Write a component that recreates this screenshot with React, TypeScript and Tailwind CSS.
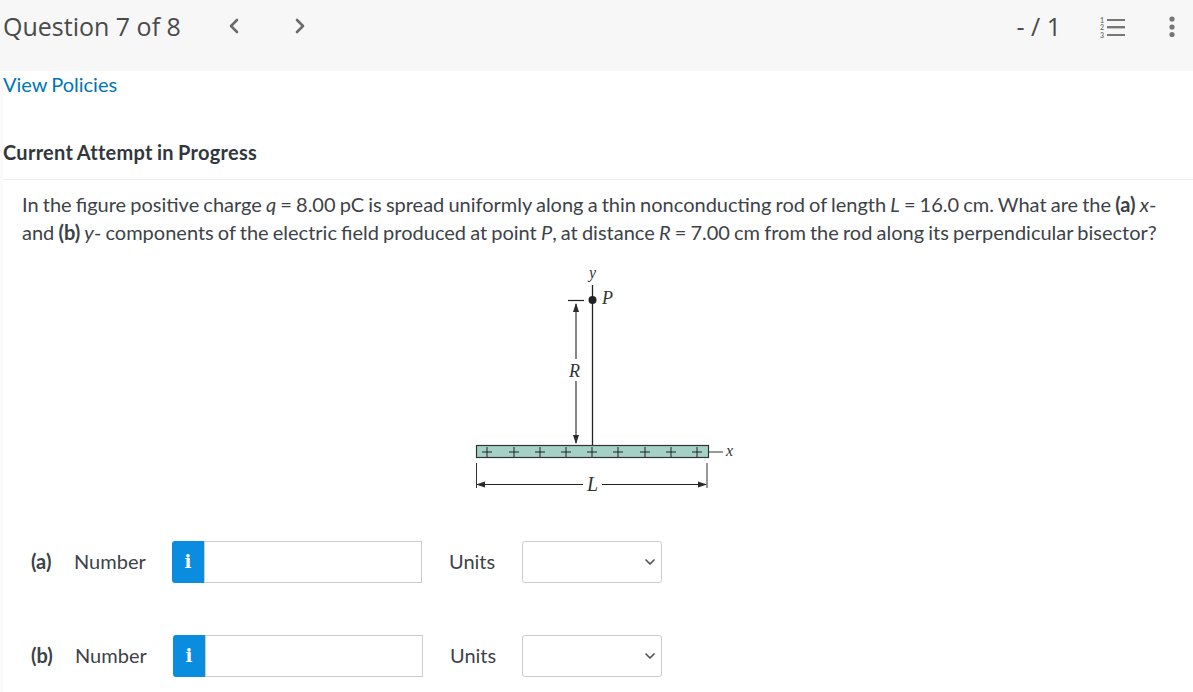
import { ChevronDown, ChevronLeft, ChevronRight } from 'lucide-react'

function RodFigure() {
  const plusX = [487, 514, 540, 566, 592, 618, 645, 671, 697]
  return (
    <svg width="280" height="232" viewBox="460 264 280 232" className="block">
      <defs>
        <marker id="head" markerUnits="userSpaceOnUse" markerWidth="9" markerHeight="7" refX="8" refY="3.5" orient="auto-start-reverse">
          <path d="M0 0.5 L9 3.5 L0 6.5 Z" fill="#2b2b2b" />
        </marker>
      </defs>
      <g fontFamily="'Liberation Serif', serif" fontStyle="italic" fill="#333">
        <text x="589" y="278" fontSize="16">y</text>
        <text x="602" y="304" fontSize="18">P</text>
        <text x="569" y="377" fontSize="18">R</text>
        <text x="726" y="456" fontSize="16">x</text>
        <text x="587" y="491" fontSize="20">L</text>
      </g>
      <path d="M592.5 285 V446" stroke="#222" strokeWidth="1.3" />
      <circle cx="592.5" cy="300" r="4" fill="#222" />
      <path d="M568 300.5 H584" stroke="#222" strokeWidth="1.2" />
      <path d="M576 359 V304" stroke="#222" strokeWidth="1.1" markerEnd="url(#head)" />
      <path d="M576 381 V443" stroke="#222" strokeWidth="1.1" markerEnd="url(#head)" />
      <rect x="476.5" y="445.5" width="232" height="12" fill="#a5d0c6" stroke="#333" strokeWidth="1.2" />
      {plusX.map((x) => (
        <path key={x} d={`M${x - 5} 452 H${x + 5} M${x} 447 V457`} stroke="#222" strokeWidth="1" />
      ))}
      <path d="M709 452 H723" stroke="#333" strokeWidth="1" />
      <path d="M476.5 463 V488 M707 463 V488" stroke="#333" strokeWidth="1" />
      <path d="M583 484.5 H477" stroke="#222" strokeWidth="1.1" markerEnd="url(#head)" />
      <path d="M602 484.5 H706" stroke="#222" strokeWidth="1.1" markerEnd="url(#head)" />
    </svg>
  )
}

function Row({ label, second }: { label: string; second?: boolean }) {
  return (
    <div className="flex items-center h-[42px]">
      <span className={`${second ? 'w-[44px]' : 'w-[43px]'} pb-[2px] font-bold text-[#3d4248]`}>{label}</span>
      <span className="w-[98px] pb-[2px] text-[#3d4248]">Number</span>
      <div className="w-[32px] h-full bg-[#0a8ddf] rounded-l-[3px] flex items-center justify-center text-white font-bold text-[18px] pb-[2px] font-['DejaVu_Serif',serif]">
        i
      </div>
      <div className="w-[218px] h-full bg-white border border-[#cccccc]" />
      <span className={`ml-[27px] ${second ? 'w-[72px]' : 'w-[73px]'} pb-[2px] text-[#3d4248]`}>Units</span>
      <div className="w-[140px] h-full bg-white border border-[#cccccc] rounded-[3px] flex items-center justify-end pr-[3px]">
        <ChevronDown size={16} strokeWidth={2.6} color="#555" />
      </div>
    </div>
  )
}

export default function App() {
  return (
    <div className="h-[692px] w-[1193px] overflow-hidden bg-white text-[20px] text-[#3d4248] font-['Lato',sans-serif] [word-spacing:-1px]">
      <header className="h-[71px] bg-[#f7f7f7] flex items-start pl-[3px] pt-[9px] pr-[18px]">
        <h1 className="text-[25px] leading-[34px] text-[#4a4a4a] font-['Open_Sans',sans-serif] [word-spacing:0]">
          Question 7 of 8
        </h1>
        <ChevronLeft size={24} strokeWidth={2.6} color="#6b6b6b" className="ml-[41px] mt-[5px]" />
        <ChevronRight size={24} strokeWidth={2.6} color="#6b6b6b" className="ml-[42px] mt-[5px]" />
        <div className="ml-auto flex items-center h-[36px]">
          <span className="text-[25px] text-[#4a4a4a] mr-[38px] font-['Open_Sans',sans-serif] [word-spacing:0]">
            - / 1
          </span>
          <svg width="26" height="22" viewBox="0 0 26 22" className="mr-[44px]">
            <g fill="#777">
              <rect x="8" y="3" width="18" height="2" />
              <rect x="8" y="10" width="18" height="2.4" />
              <rect x="8" y="18" width="18" height="2" />
              <text x="1" y="7" fontSize="7" fontWeight="700">1</text>
              <text x="1" y="14" fontSize="7" fontWeight="700">2</text>
              <text x="1" y="22" fontSize="7" fontWeight="700">3</text>
            </g>
          </svg>
          <svg width="6" height="22" viewBox="0 0 6 22">
            <circle cx="3" cy="3" r="2.6" fill="#777" />
            <circle cx="3" cy="11" r="2.6" fill="#777" />
            <circle cx="3" cy="18.5" r="2.6" fill="#777" />
          </svg>
        </div>
      </header>

      <main className="border-l-[3px] border-[#fafafa] h-[621px]">
        <a className="block mt-[1px] leading-[24px] text-[#0076b6]">View Policies</a>
        <div className="mt-[44px] leading-[24px] font-bold text-[#32373d] tracking-[0.28px] border-b border-[#efefef] pb-[15px]">
          Current Attempt in Progress
        </div>
        <p className="pl-[19px] mt-[10px] leading-[28px] w-[1170px]">
          In the figure positive charge <i>q</i> = 8.00 pC is spread uniformly along a thin nonconducting rod of length <i>L</i> = 16.0 cm. What are the{' '}
          <b>(a)</b> <i>x</i>- and <b>(b)</b> <i>y</i>- components of the electric field produced at point <i>P</i>, at distance <i>R</i> = 7.00 cm from the rod along its perpendicular bisector?
        </p>
        <div className="ml-[457px] mt-[18px]">
          <RodFigure />
        </div>
        <div className="pl-[28px] mt-[45px] flex flex-col gap-[52px]">
          <Row label="(a)" />
          <Row label="(b)" second />
        </div>
      </main>
    </div>
  )
}
